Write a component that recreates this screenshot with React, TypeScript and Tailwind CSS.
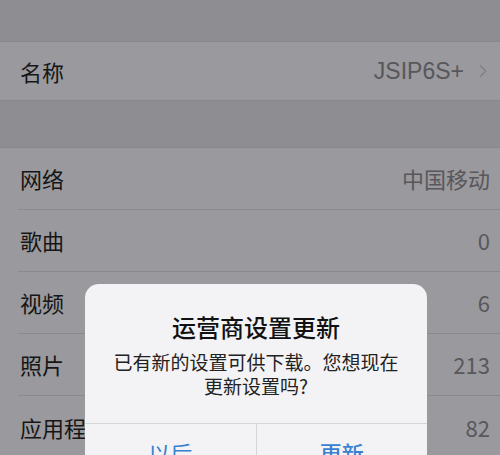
import { ChevronRight } from 'lucide-react';

const rows = [
    { label: '网络', value: '中国移动' },
    { label: '歌曲', value: '0' },
    { label: '视频', value: '6' },
    { label: '照片', value: '213' },
    { label: '应用程序', value: '82' },
];

export default function App() {
    return (
        <div
            className="relative w-[500px] h-[455px] overflow-hidden bg-[#8e8d91]"
            style={{ fontFamily: '"Noto Sans CJK SC", "Noto Sans", sans-serif' }}
        >
            <div className="h-[41px]" />
            <div className="h-[60px] bg-[#9a999d] border-y border-[#88878b] flex items-center pl-[20px] pr-[6px] text-[22px]">
                <span className="text-[#161616]">名称</span>
                <span
                    className="ml-auto text-[#58575b] text-[23px]"
                    style={{ fontFamily: '"Liberation Sans", sans-serif' }}
                >
                    JSIP6S+
                </span>
                <ChevronRight className="ml-[8px] text-[#808084]" size={22} strokeWidth={1.5} />
            </div>
            <div className="h-[46px]" />
            <div className="bg-[#9a999d] border-t border-[#88878b]">
                {rows.map((r, i) => (
                    <div key={r.label} className="pl-[18px]">
                        <div
                            className={
                                'h-[62px] flex items-center pr-[10px] text-[22px] ' +
                                (i < rows.length - 1 ? 'border-b border-[#8a898d]' : '')
                            }
                        >
                            <span className="pl-[2px] text-[#161616]">{r.label}</span>
                            <span className="ml-auto text-[#58575b]">{r.value}</span>
                        </div>
                    </div>
                ))}
            </div>

            <div className="absolute left-[85px] top-[284px] w-[342px] rounded-[14px] bg-[#f3f3f5] overflow-hidden">
                <div className="pt-[28px] pb-[25px] px-[20px] text-center">
                    <div className="text-[24px] leading-[30px] font-medium text-[#111]">运营商设置更新</div>
                    <div className="mt-[8px] text-[19px] leading-[24px] text-[#222]">
                        已有新的设置可供下载。您想现在
                        <br />
                        更新设置吗?
                    </div>
                </div>
                <div className="flex border-t border-[#d6d6d9] h-[58px] text-[22px] text-[#3a7fd2]">
                    <div className="flex-1 flex items-center justify-center border-r border-[#d6d6d9]">以后</div>
                    <div className="flex-1 flex items-center justify-center font-medium">更新</div>
                </div>
            </div>
        </div>
    );
}
